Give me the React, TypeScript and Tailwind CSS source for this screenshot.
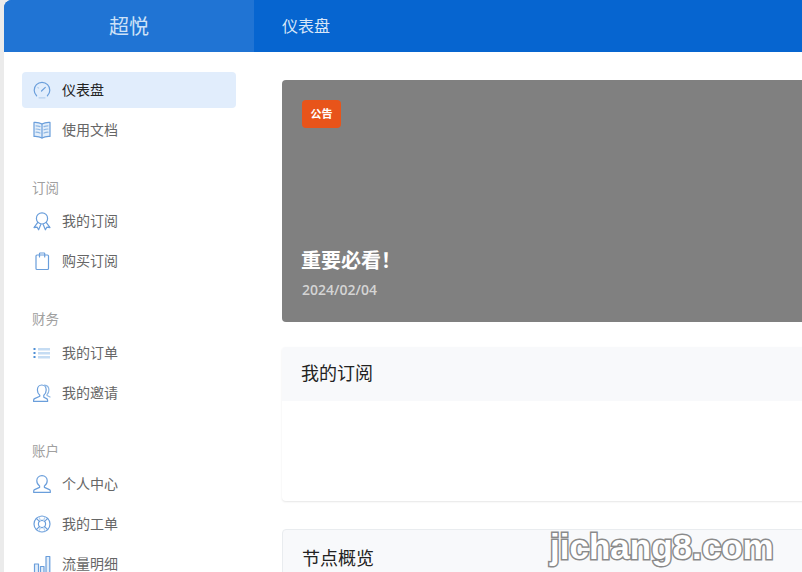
import type { ReactNode } from 'react'

// ── Icons ─────────────────────────────────────────────────────────────────────

function Icon({ children }: { children: ReactNode }) {
  return (
    <svg width={20} height={20} viewBox="0 0 20 20" fill="none" aria-hidden="true" stroke="#6a9edb" strokeWidth="1.2" strokeLinecap="round" strokeLinejoin="round" className="shrink-0">
      {children}
    </svg>
  )
}

function IconGauge() {
  return (
    <Icon>
      <path d="M4.600 15.800A7.800 7.800 0 1 1 15.400 15.800" />
      <path d="M7 17.800h6" stroke="#b5d0ee" />
      <path d="M9.500 11l3.800-3.600" />
      <path d="M5.800 7.500l.8.6" stroke="#b5d0ee" />
    </Icon>
  )
}

function IconBook() {
  return (
    <Icon>
      <path d="M10 4C8 2.800 5 2.200 2 2.400v14c3-.2 6 .4 8 1.600 2-1.200 5-1.800 8-1.600v-14c-3-.2-6 .4-8 1.600z" fill="#e3eefa" />
      <path d="M10 4v14" />
      <path d="M4 5.800c1.400 0 2.800.2 4 .8M4 9c1.400 0 2.800.2 4 .8M4 12.200c1.400 0 2.800.2 4 .8M16 5.800c-1.400 0-2.800.2-4 .8M16 9c-1.400 0-2.800.2-4 .8M16 12.200c-1.400 0-2.800.2-4 .8" stroke="#8db6e3" />
    </Icon>
  )
}

function IconAward() {
  return (
    <Icon>
      <circle cx="10" cy="7.400" r="5.600" />
      <path d="M5.800 11.400L2 16.600l3.200-.4 1.400 2.600 2.200-5.200M14.200 11.400l3.800 5.200-3.200-.4-1.400 2.600-2.200-5.200" />
    </Icon>
  )
}

function IconBag() {
  return (
    <Icon>
      <rect x="4" y="4" width="12.500" height="14.500" rx="1" />
      <path d="M7.500 6V2.600c0-.4.200-.6.600-.6h4c.4 0 .6.200.6.600V6" />
    </Icon>
  )
}

function IconList() {
  return (
    <svg width={20} height={20} viewBox="0 0 20 20" aria-hidden="true" className="shrink-0">
      <rect x="1.500" y="5" width="2" height="2" fill="#4f8fd6" />
      <rect x="1.500" y="9" width="2" height="2" fill="#4f8fd6" />
      <rect x="1.500" y="13" width="2" height="2" fill="#4f8fd6" />
      <rect x="6" y="5" width="12" height="2.500" fill="#c5dcf3" />
      <rect x="6" y="9" width="12" height="2.500" fill="#c5dcf3" />
      <rect x="6" y="13" width="12" height="2.500" fill="#c5dcf3" />
    </svg>
  )
}

function IconUsers() {
  return (
    <Icon>
      <path d="M11.800 12.200c1.600-1.200 2.400-3 2.400-5.200 0-2.800-1.800-5-4.400-5S5.400 4.200 5.400 7c0 2.200.8 4 2.400 5.200v1l-5.200 2.400c-.8.400-1 1-1 1.600v1.200h14v-1.200c0-.6-.2-1.200-1-1.600l-2.800-1.400z" />
      <path d="M12.500 2.200c2.500.2 4.400 2.200 4.400 4.800 0 1.800-.7 3.400-1.900 4.600v.9l3 1.500" stroke="#8db6e3" />
    </Icon>
  )
}

function IconUser() {
  return (
    <Icon>
      <path d="M12.400 12c1.800-1.200 2.800-3 2.800-5.200C15.200 3.800 13 1.600 10 1.600S4.800 3.800 4.800 6.800c0 2.200 1 4 2.800 5.200v1.400l-5 2.200c-.6.300-.9.800-.9 1.400v1.400h16.600V17c0-.6-.3-1.100-.9-1.400l-5-2.200z" />
    </Icon>
  )
}

function IconLifebuoy() {
  return (
    <Icon>
      <circle cx="10" cy="10" r="8" />
      <circle cx="10" cy="10" r="3.600" />
      <path d="M4.300 4.300l3.100 3.100M15.700 4.300l-3.100 3.100M4.300 15.700l3.100-3.100M15.700 15.700l-3.100-3.100" />
      <path d="M6.800 2.700l1.800 4M13.200 2.700l-1.800 4M6.800 17.300l1.800-4M13.200 17.300l-1.800-4" stroke="#b5d0ee" />
    </Icon>
  )
}

function IconBars() {
  return (
    <Icon>
      <rect x="2.500" y="10" width="4" height="8.500" fill="#e3eefa" />
      <rect x="8.500" y="12.500" width="3.500" height="6" fill="#e3eefa" />
      <rect x="14" y="2.500" width="3.800" height="16" fill="#e3eefa" />
    </Icon>
  )
}

// ── Sidebar ───────────────────────────────────────────────────────────────────

function NavItem({ icon, label, active }: { icon: ReactNode; label: string; active?: boolean }) {
  return (
    <div className={`h-9 mb-1 pl-[10px] flex items-center gap-[10px] rounded text-sm ${active ? 'bg-[#e1edfc] text-[#222]' : 'text-[#666]'}`}>
      {icon}
      <span className="-translate-y-px">{label}</span>
    </div>
  )
}

function NavLabel({ children }: { children: string }) {
  return (
    <div className="mt-[30px] mb-[5.400px] pl-[10px] h-5 text-[#a0a0a0]">
      <span className="block -translate-y-px leading-5 text-[13.500px]">{children}</span>
    </div>
  )
}

function Sidebar() {
  return (
    <aside className="w-[250px] shrink-0 bg-white px-[18px] pt-5">
      <NavItem icon={<IconGauge />} label="仪表盘" active />
      <NavItem icon={<IconBook />} label="使用文档" />
      <NavLabel>订阅</NavLabel>
      <NavItem icon={<IconAward />} label="我的订阅" />
      <NavItem icon={<IconBag />} label="购买订阅" />
      <NavLabel>财务</NavLabel>
      <NavItem icon={<IconList />} label="我的订单" />
      <NavItem icon={<IconUsers />} label="我的邀请" />
      <NavLabel>账户</NavLabel>
      <NavItem icon={<IconUser />} label="个人中心" />
      <NavItem icon={<IconLifebuoy />} label="我的工单" />
      <NavItem icon={<IconBars />} label="流量明细" />
    </aside>
  )
}

// ── Page ──────────────────────────────────────────────────────────────────────

export default function App() {
  return (
    <div className="relative w-[802px] h-[572px] overflow-hidden bg-[#ebebeb] pl-1 font-['Noto_Sans_CJK_SC','Noto_Sans',sans-serif]">
      <header className="h-[52px] flex rounded-tl-lg overflow-hidden bg-[#0665d0]">
        <div className="w-[250px] shrink-0 bg-[#2074d4] flex items-center justify-center text-xl text-[#cfe2f7]">超悦</div>
        <div className="pl-7 pb-[2px] flex items-center text-base text-[#d8e6f8]">仪表盘</div>
      </header>
      <div className="flex h-[520px]">
        <Sidebar />
        <main className="flex-1 min-w-0 bg-white pl-7 pt-7 overflow-hidden">
          <div className="w-[640px]">
            <section className="h-[242px] rounded bg-[#808080] px-5 pt-5 flex flex-col items-start">
              <span className="h-7 w-[39px] pb-[2px] rounded bg-[#e8541a] flex items-center justify-center text-[11px] font-bold text-white">公告</span>
              <h2 className="mt-[118px] -ml-px text-xl leading-7 font-bold text-white">重要必看！</h2>
              <p className="mt-[6px] text-sm leading-5 font-semibold text-[#d4d4d4] font-['Open_Sans',sans-serif]">2024/02/04</p>
            </section>
            <section className="mt-[25px] h-[154px] rounded bg-white shadow-[0_1px_2px_rgba(0,0,0,0.1)]">
              <div className="h-[54px] rounded-t bg-[#f8f9fb] pl-[19px] pb-1 flex items-center text-lg text-[#222]">我的订阅</div>
            </section>
            <section className="mt-7 rounded-t border border-[#e9ecef] bg-[#f8f9fb] h-[60px] pl-[19px] pt-[13px] text-lg leading-7 text-[#222]">节点概览</section>
          </div>
        </main>
      </div>
      <span className="absolute left-[550px] top-[525px] text-[35px] leading-[44px] font-bold text-white [-webkit-text-stroke:3px_#8a8a8a] [paint-order:stroke_fill] font-['Liberation_Sans',sans-serif]">jichang8.com</span>
    </div>
  )
}
